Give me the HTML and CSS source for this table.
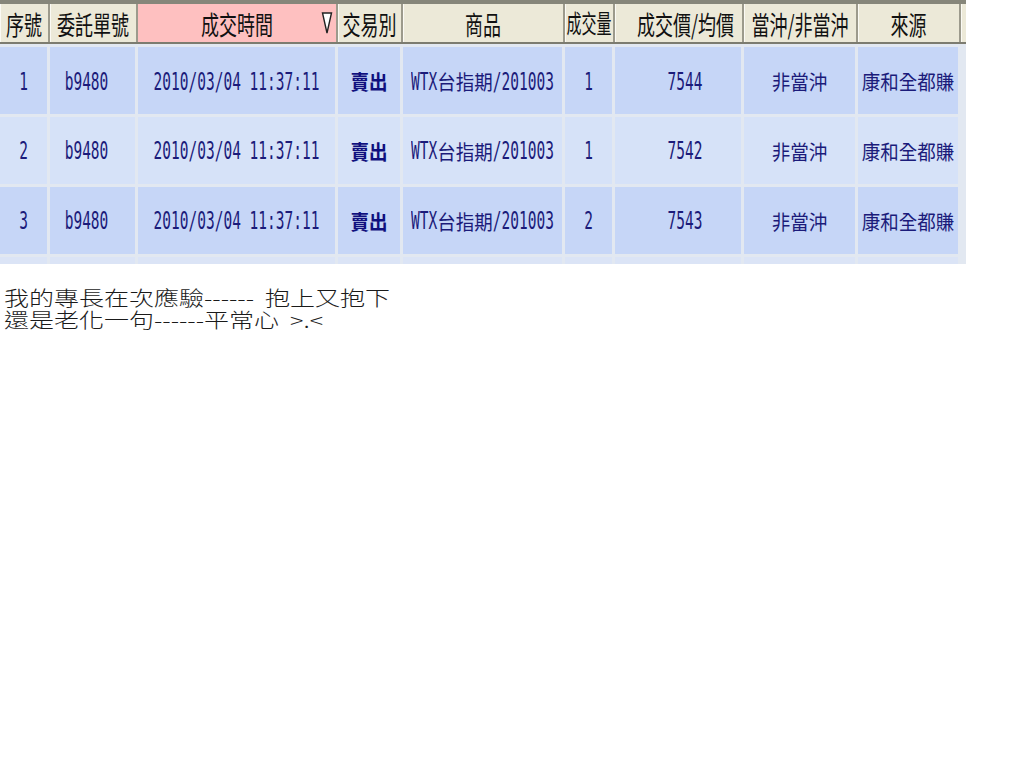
FILE: index.html
```html
<!DOCTYPE html>
<html lang="zh-Hant">
<head>
<meta charset="utf-8">
<title>成交回報</title>
<link rel="stylesheet" href="styles.css">
</head>
<body>
<div class="grid">
  <div class="topbar"></div>
  <div class="row head">
    <div class="hc"><span class="ht">序號</span></div>
    <div class="hc"><span class="ht">委託單號</span></div>
    <div class="hc sorted"><span class="ht">成交時間</span>
      <svg class="sort" width="12" height="26" viewBox="0 0 12 26"><polygon points="1.5,3 10.5,3 6,23" fill="#fff" stroke="#222" stroke-width="1.4"/></svg>
    </div>
    <div class="hc"><span class="ht">交易別</span></div>
    <div class="hc"><span class="ht">商品</span></div>
    <div class="hc"><span class="ht tight">成交量</span></div>
    <div class="hc price"><span class="ht">成交價/均價</span></div>
    <div class="hc"><span class="ht">當沖/非當沖</span></div>
    <div class="hc"><span class="ht">來源</span></div>
    <div class="hc filler"></div>
  </div>
  <div class="body">
    <div class="row data odd">
      <div class="dc"><span class="l">1</span></div>
      <div class="dc order"><span class="l">b9480</span></div>
      <div class="dc"><span class="l">2010/03/04 11:37:11</span></div>
      <div class="dc"><span class="c b">賣出</span></div>
      <div class="dc"><span class="l">WTX</span><span class="c">台指期</span><span class="l">/201003</span></div>
      <div class="dc"><span class="l">1</span></div>
      <div class="dc price"><span class="l">7544</span></div>
      <div class="dc"><span class="c">非當沖</span></div>
      <div class="dc"><span class="c">康和全都賺</span></div>
      <div class="dc filler"></div>
    </div>
    <div class="row data even">
      <div class="dc"><span class="l">2</span></div>
      <div class="dc order"><span class="l">b9480</span></div>
      <div class="dc"><span class="l">2010/03/04 11:37:11</span></div>
      <div class="dc"><span class="c b">賣出</span></div>
      <div class="dc"><span class="l">WTX</span><span class="c">台指期</span><span class="l">/201003</span></div>
      <div class="dc"><span class="l">1</span></div>
      <div class="dc price"><span class="l">7542</span></div>
      <div class="dc"><span class="c">非當沖</span></div>
      <div class="dc"><span class="c">康和全都賺</span></div>
      <div class="dc filler"></div>
    </div>
    <div class="row data odd">
      <div class="dc"><span class="l">3</span></div>
      <div class="dc order"><span class="l">b9480</span></div>
      <div class="dc"><span class="l">2010/03/04 11:37:11</span></div>
      <div class="dc"><span class="c b">賣出</span></div>
      <div class="dc"><span class="l">WTX</span><span class="c">台指期</span><span class="l">/201003</span></div>
      <div class="dc"><span class="l">2</span></div>
      <div class="dc price"><span class="l">7543</span></div>
      <div class="dc"><span class="c">非當沖</span></div>
      <div class="dc"><span class="c">康和全都賺</span></div>
      <div class="dc filler"></div>
    </div>
    <div class="row data partial">
      <div class="dc"></div><div class="dc"></div><div class="dc"></div><div class="dc"></div><div class="dc"></div>
      <div class="dc"></div><div class="dc"></div><div class="dc"></div><div class="dc"></div><div class="dc filler"></div>
    </div>
  </div>
</div>
<div class="note">
  <p>我的專長在次應驗------&nbsp;&nbsp;抱上又抱下</p>
  <p>還是老化一句------平常心&nbsp;&nbsp;&gt;.&lt;</p>
</div>
</body>
</html>
```
FILE: styles.css
```css
* { box-sizing: border-box; }
html, body { margin: 0; padding: 0; background: #fff; }
body { font-family: "Noto Sans CJK TC", "Noto Sans", sans-serif; }

.grid { width: 966px; }
.topbar { height: 4px; background: #86867a; }

.row {
  display: grid;
  grid-template-columns: 50px 88px 200px 65px 162px 50px 129px 114px 103px 5px;
}

.head {
  height: 40px;
  background: #ece9d8;
  border-bottom: 2px solid #7c7c70;
}
.hc {
  display: flex;
  align-items: center;
  justify-content: center;
  border-right: 2px solid #9c9a8c;
  box-shadow: inset 1px 0 0 #fbfaf4;
  overflow: hidden;
  position: relative;
}
.hc.sorted { background: #fec0c0; box-shadow: none; }
.hc.filler { border-right: none; }
.ht {
  display: inline-block;
  font-size: 18px;
  line-height: 20px;
  color: #111;
  transform: scaleY(1.45);
  white-space: nowrap;
}
.ht.tight { font-size: 15px; transform: scaleY(1.7); }
.sort { position: absolute; right: 3px; top: 6px; }
.price { padding-left: 14px; }
.order { padding-right: 12px; }

.body {
  background: #e2e8f1;
  padding-top: 3px;
}
.data { height: 67px; margin-bottom: 3px; }
.data.partial { height: 7px; margin-bottom: 0; }
.dc {
  display: flex;
  align-items: center;
  justify-content: center;
  border-right: 3px solid #e2e8f1;
  color: #1b1b7a;
  white-space: nowrap;
}
.dc.filler { border-right: none; }
.odd .dc { background: #c6d6f7; }
.even .dc { background: #d6e2f8; }
.partial .dc { background: #dbe4f6; }
.odd .dc.filler, .even .dc.filler, .partial .dc.filler { background: #e2e8f1; }

.l {
  display: inline-block;
  font-family: "DejaVu Sans Mono", "Liberation Mono", monospace;
  font-size: 14.5px;
  line-height: 16px;
  transform: scaleY(1.7);
}
.c {
  display: inline-block;
  font-size: 18.5px;
  line-height: 20px;
  transform: scaleY(1.12);
}
.c.b { font-weight: bold; color: #10107e; }

.note {
  margin-top: 23px;
  padding-left: 4px;
  transform: scaleY(0.8);
  transform-origin: top left;
  color: #1a1a1a;
}
.note p {
  margin: 0;
  font-size: 25px;
  line-height: 27px;
  font-weight: 300;
  white-space: nowrap;
}
```
